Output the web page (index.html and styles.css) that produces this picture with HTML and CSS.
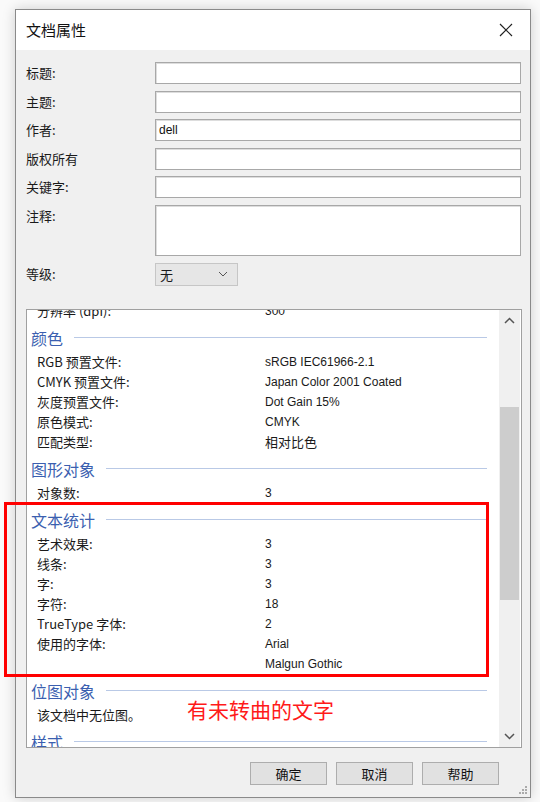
FILE: index.html
```html
<!DOCTYPE html>
<html lang="zh-CN">
<head>
<meta charset="utf-8">
<title>文档属性</title>
<link rel="stylesheet" href="styles.css">
</head>
<body>
<div class="dialog">
  <div class="titlebar">
    <span class="title">文档属性</span>
    <svg class="close" width="14" height="14" viewBox="0 0 14 14"><path d="M1 1 L13 13 M13 1 L1 13" stroke="#222" stroke-width="1.2" fill="none"/></svg>
  </div>
  <div class="body">
    <div class="form">
      <label>标题:</label><div class="input"></div>
      <label>主题:</label><div class="input"></div>
      <label>作者:</label><div class="input"><span class="val">dell</span></div>
      <label>版权所有</label><div class="input"></div>
      <label>关键字:</label><div class="input"></div>
      <label>注释:</label><div class="input area"></div>
      <label class="lvl">等级:</label>
      <div class="combo"><span>无</span><svg width="10" height="6" viewBox="0 0 10 6"><path d="M1 1 L5 5 L9 1" stroke="#555" stroke-width="1" fill="none"/></svg></div>
    </div>

    <div class="panel">
      <div class="content">
        <div class="row first"><span class="k">分辨率 (dpi):</span><span class="v">300</span></div>
        <div class="hdr"><span>颜色</span><i></i></div>
        <div class="row"><span class="k">RGB 预置文件:</span><span class="v">sRGB IEC61966-2.1</span></div>
        <div class="row"><span class="k">CMYK 预置文件:</span><span class="v">Japan Color 2001 Coated</span></div>
        <div class="row"><span class="k">灰度预置文件:</span><span class="v">Dot Gain 15%</span></div>
        <div class="row"><span class="k">原色模式:</span><span class="v">CMYK</span></div>
        <div class="row"><span class="k">匹配类型:</span><span class="v cjk">相对比色</span></div>
        <div class="hdr"><span>图形对象</span><i></i></div>
        <div class="row"><span class="k">对象数:</span><span class="v">3</span></div>
        <div class="hdr"><span>文本统计</span><i></i></div>
        <div class="row"><span class="k">艺术效果:</span><span class="v">3</span></div>
        <div class="row"><span class="k">线条:</span><span class="v">3</span></div>
        <div class="row"><span class="k">字:</span><span class="v">3</span></div>
        <div class="row"><span class="k">字符:</span><span class="v">18</span></div>
        <div class="row"><span class="k">TrueType 字体:</span><span class="v">2</span></div>
        <div class="row"><span class="k">使用的字体:</span><span class="v">Arial</span></div>
        <div class="row"><span class="k"></span><span class="v">Malgun Gothic</span></div>
        <div class="hdr"><span>位图对象</span><i></i></div>
        <div class="row"><span class="k">该文档中无位图。</span></div>
        <div class="hdr"><span>样式</span><i></i></div>
      </div>
      <div class="scrollbar">
        <svg class="arr" width="11" height="7" viewBox="0 0 11 7"><path d="M1 6 L5.5 1.5 L10 6" stroke="#555" stroke-width="1.5" fill="none"/></svg>
        <div class="track"><div class="thumb"></div></div>
        <svg class="arr" width="11" height="7" viewBox="0 0 11 7"><path d="M1 1 L5.5 5.5 L10 1" stroke="#555" stroke-width="1.5" fill="none"/></svg>
      </div>
    </div>

    <div class="buttons">
      <div class="btn">确定</div>
      <div class="btn">取消</div>
      <div class="btn">帮助</div>
    </div>
    <svg class="grip" width="9" height="9" viewBox="0 0 9 9" fill="#aaa"><rect x="6" y="0" width="2" height="2"/><rect x="3" y="3" width="2" height="2"/><rect x="6" y="3" width="2" height="2"/><rect x="0" y="6" width="2" height="2"/><rect x="3" y="6" width="2" height="2"/><rect x="6" y="6" width="2" height="2"/></svg>
  </div>
</div>
<div class="redbox"></div>
<div class="redtext">有未转曲的文字</div>
</body>
</html>
```
FILE: styles.css
```css
html, body {
  margin: 0;
  padding: 0;
}
body {
  width: 540px;
  height: 802px;
  background: #fafafa;
  font-family: "Noto Sans CJK SC", "Noto Sans", sans-serif;
  color: #1a1a1a;
  position: relative;
  overflow: hidden;
}
.dialog {
  position: absolute;
  left: 15px;
  top: 9px;
  width: 514px;
  height: 787px;
  border: 1px solid #8a8a8a;
  background: #f0f0f0;
  box-shadow: 0 0 12px rgba(0,0,0,0.18);
  display: flex;
  flex-direction: column;
}
.titlebar {
  height: 40px;
  background: #fff;
  display: flex;
  align-items: center;
  justify-content: space-between;
  padding: 0 17px 0 10px;
  flex: none;
}
.title {
  font-size: 15px;
  color: #111;
  line-height: 20px;
}
.body {
  flex: 1;
  position: relative;
  padding: 12px 9px 0 10px;
}
.form {
  display: grid;
  grid-template-columns: 129px 366px;
  row-gap: 6.6px;
  align-items: start;
}
.form label {
  font-size: 13px;
  line-height: 22px;
  color: #1a1a1a;
}
.input {
  height: 20px;
  border: 1px solid #a8a8a8;
  box-shadow: inset 1px 1px 0 #ddd;
  background: #fff;
  display: flex;
  align-items: center;
  padding-left: 3px;
}
.input.area {
  height: 49px;
}
.val {
  font-family: "Liberation Sans", sans-serif;
  font-size: 12px;
  color: #111;
}
.combo {
  border: 1px solid #c6c6c6;
  background: #e6e6e6;
  display: flex;
  align-items: center;
  justify-content: space-between;
  padding: 0 9px 0 4px;
  box-sizing: border-box;
  width: 83px;
  height: 23px;
  font-size: 13px;
}
.panel {
  margin-top: 23px;
  width: 496px;
  height: 439px;
  box-sizing: border-box;
  border: 1px solid #a0a0a0;
  background: #fff;
  display: flex;
  overflow: hidden;
}
.content {
  flex: 1;
  overflow: hidden;
  padding-left: 4px;
}
.row {
  height: 20px;
  display: flex;
  align-items: center;
  font-size: 13px;
  color: #1a1a1a;
}
.row.first {
  margin-top: -9px;
}
.row .k {
  width: 228px;
  padding-left: 6px;
  flex: none;
}
.row .v {
  font-family: "Liberation Sans", "Noto Sans CJK SC", sans-serif;
  font-size: 12px;
}
.row .v.cjk {
  font-family: "Noto Sans CJK SC", sans-serif;
  font-size: 13px;
}
.hdr {
  height: 26px;
  margin-top: 4px;
  display: flex;
  align-items: center;
  color: #3b5fb0;
  font-size: 16px;
}
.hdr span {
  flex: none;
  margin-right: 11px;
}
.hdr i {
  flex: 1;
  margin-right: 12px;
  height: 1px;
  background: #b9c9e6;
}
.hdr + .row {
  margin-top: 1px;
}
.scrollbar {
  width: 21px;
  flex: none;
  margin-right: 1px;
  background: #f0f0f0;
  display: flex;
  flex-direction: column;
  align-items: center;
}
.arr {
  flex: none;
  margin: 7px 0;
}
.track {
  flex: 1;
  width: 100%;
  padding-top: 76px;
  box-sizing: border-box;
}
.thumb {
  height: 193px;
  margin: 0 1px;
  background: #cdcdcd;
}
.buttons {
  display: flex;
  justify-content: flex-end;
  gap: 9px;
  margin-top: 14px;
  padding-right: 22px;
}
.btn {
  width: 75px;
  height: 21px;
  border: 1px solid #adadad;
  background: #e1e1e1;
  font-size: 13px;
  display: flex;
  align-items: center;
  justify-content: center;
  color: #111;
}
.grip {
  position: absolute;
  right: 2px;
  bottom: 2px;
}
.redbox {
  position: absolute;
  left: 4px;
  top: 502px;
  width: 479px;
  height: 169px;
  border: 3px solid #f00;
}
.redtext {
  position: absolute;
  left: 187px;
  top: 696px;
  font-size: 21px;
  line-height: 26px;
  color: #ff1a1a;
}
```
